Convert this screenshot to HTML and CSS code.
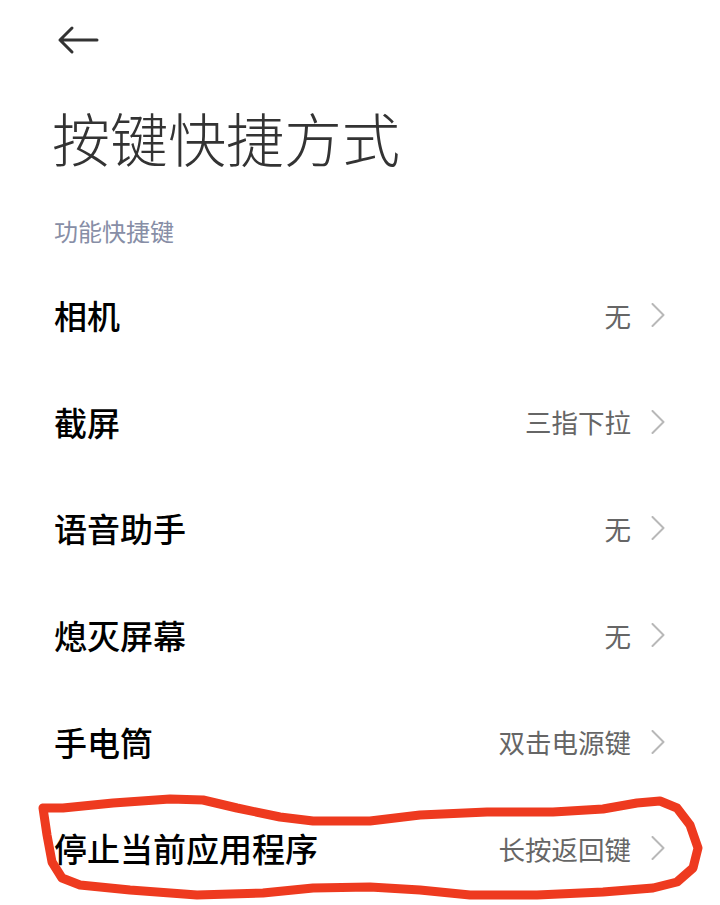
FILE: index.html
```html
<!DOCTYPE html>
<html lang="zh-CN">
<head>
    <meta charset="UTF-8">
    <meta name="viewport" content="width=device-width, initial-scale=1.0">
    <title>按键快捷方式</title>
    <link rel="stylesheet" href="styles.css">
</head>
<body>
    <div class="screen">
        <div class="topbar">
            <svg class="back" width="44" height="30" viewBox="0 0 44 30">
                <path d="M41 15 H4 M16 3 L4 15 L16 27" />
            </svg>
        </div>

        <h1 class="title">按键快捷方式</h1>
        <div class="section-label">功能快捷键</div>

        <div class="list">
            <div class="row">
                <span class="row-name">相机</span>
                <span class="row-value">无</span>
                <svg class="chevron" width="14" height="24" viewBox="0 0 14 24"><path d="M1.5 1 L12.5 12 L1.5 23" /></svg>
            </div>
            <div class="row">
                <span class="row-name">截屏</span>
                <span class="row-value">三指下拉</span>
                <svg class="chevron" width="14" height="24" viewBox="0 0 14 24"><path d="M1.5 1 L12.5 12 L1.5 23" /></svg>
            </div>
            <div class="row">
                <span class="row-name">语音助手</span>
                <span class="row-value">无</span>
                <svg class="chevron" width="14" height="24" viewBox="0 0 14 24"><path d="M1.5 1 L12.5 12 L1.5 23" /></svg>
            </div>
            <div class="row">
                <span class="row-name">熄灭屏幕</span>
                <span class="row-value">无</span>
                <svg class="chevron" width="14" height="24" viewBox="0 0 14 24"><path d="M1.5 1 L12.5 12 L1.5 23" /></svg>
            </div>
            <div class="row">
                <span class="row-name">手电筒</span>
                <span class="row-value">双击电源键</span>
                <svg class="chevron" width="14" height="24" viewBox="0 0 14 24"><path d="M1.5 1 L12.5 12 L1.5 23" /></svg>
            </div>
            <div class="row">
                <span class="row-name">停止当前应用程序</span>
                <span class="row-value">长按返回键</span>
                <svg class="chevron" width="14" height="24" viewBox="0 0 14 24"><path d="M1.5 1 L12.5 12 L1.5 23" /></svg>
            </div>
        </div>

        <!-- hand-drawn red mark over the last row -->
        <svg class="scribble" width="720" height="905" viewBox="0 0 720 905">
            <path d="M43 808 L63 808 L113 803 L170 799 L203 800 L237 808 L280 817 L313 821 L370 821 L420 815 L487 812 L553 812 L603 809 L637 803 L660 801 L677 808 L690 825 L698 848 L693 868 L677 882 L653 888 L603 892 L537 895 L470 895 L420 890 L370 887 L313 888 L263 893 L197 895 L130 890 L80 885 L62 878 L52 862 L47 835 L43 808" />
        </svg>
    </div>
</body>
</html>
```

FILE: styles.css
```css
body {
    margin: 0;
    background-color: #ffffff;
    font-family: "Noto Sans CJK SC", "Noto Sans", sans-serif;
}

.screen {
    position: relative;
    width: 720px;
    height: 905px;
    overflow: hidden;
    padding: 0 55px 0 54px;
    box-sizing: border-box;
}

.topbar {
    height: 80px;
    display: flex;
    align-items: center;
}

.back {
    margin-left: 2px;
}

.back path {
    fill: none;
    stroke: #333333;
    stroke-width: 3;
    stroke-linecap: round;
    stroke-linejoin: round;
}

.title {
    margin: 17px 0 0 -2px;
    font-size: 58px;
    line-height: 80px;
    font-weight: 300;
    color: #333333;
}

.section-label {
    margin-top: 34px;
    font-size: 24px;
    line-height: 40px;
    color: #878ea6;
}

.list {
    margin-top: 11px;
}

.row {
    height: 106.6px;
    display: flex;
    align-items: center;
}

.row-name {
    flex: 1;
    font-size: 33px;
    font-weight: 500;
    color: #000000;
}

.row-value {
    font-size: 26.5px;
    color: #666666;
    margin-right: 20px;
}

.chevron path {
    fill: none;
    stroke: #b8b8b8;
    stroke-width: 2;
    stroke-linecap: round;
    stroke-linejoin: round;
}

.scribble {
    position: absolute;
    left: 0;
    top: 0;
    pointer-events: none;
}

.scribble path {
    fill: none;
    stroke: #ee3a1f;
    stroke-width: 9;
    stroke-linecap: round;
    stroke-linejoin: round;
}
```
